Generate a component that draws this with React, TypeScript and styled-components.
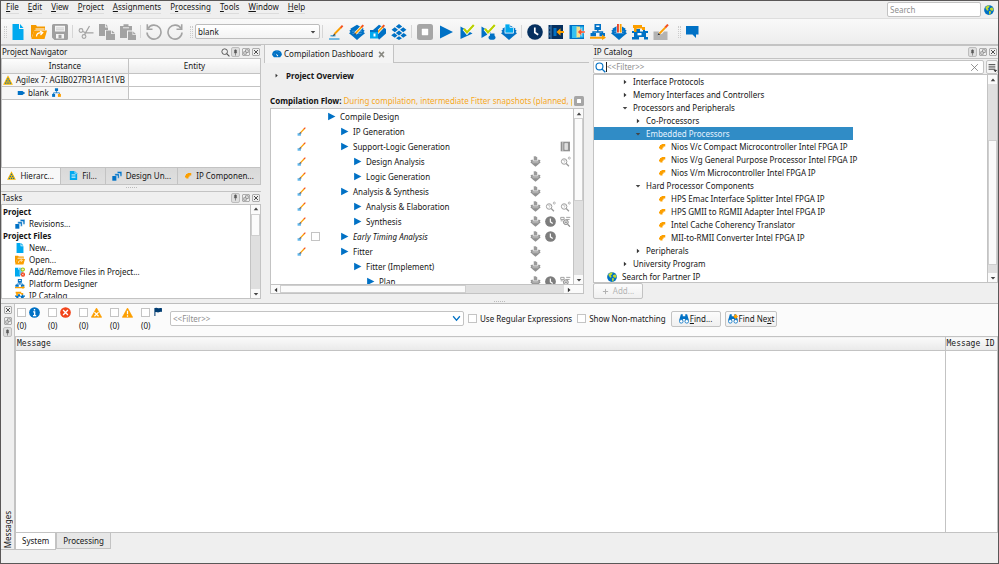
import React from "react";
import styled, { createGlobalStyle, css } from "styled-components";

const blue = "#0071c5";
const navy = "#003c71";
const orange = "#fc9f00";
const cyan = "#00a9ef";
const grey = "#a3a3a3";
const line = "#c3c3c3";
const face = "#efefef";
const sans = `"Noto Sans", "Open Sans", sans-serif`;
const mono = `"DejaVu Sans Mono", "Liberation Mono", monospace`;

const GlobalStyle = createGlobalStyle`
  * { box-sizing: border-box; }
  body { margin: 0; background: ${face}; }
  button, input, select { font: inherit; color: inherit; margin: 0; }
  ul { list-style: none; margin: 0; padding: 0; }
`;

/* ---------- icons ---------- */

const chip = (c: string) => (
  <>
    <path d="M8 16 4 12.500 0 9.200 1.500 8 .3 6.800 2 5.600 1.300 4.800 8 .8l6.700 4-.7.8 1.700 1.200L14.500 8 16 9.200l-4 3.300z" fill={c} />
    <path d="M3 7.200h10M3.400 9.400h9.200" stroke="#fff" strokeWidth=".6" opacity=".45" />
  </>
);
const pencil = (
  <>
    <path d="M6.500 9.500 12.600 3" stroke="#fff" strokeWidth="3.200" />
    <path d="M6.500 9.500 12.600 3" stroke={orange} strokeWidth="1.800" />
    <path d="m12.300 3.400 2-2.200" stroke="#f4511e" strokeWidth="2" />
    <path d="m5.300 10.800.5-2 1.500 1.300z" fill="#444" />
  </>
);
const check = <path d="m5 4.800 3 3.600L14.800 1" fill="none" stroke="#b9d000" strokeWidth="2.200" />;
const checkHalo = <path d="m5 4.800 3 3.600L14.800 1" fill="none" stroke="#fff" strokeWidth="3.600" />;
const steps = (
  <>
    <path d="M.5 8H7v7.500H.5z" fill={blue} />
    <path d="M4.500 4.500h7v7H9V7.500H4.500z" fill={blue} stroke="#fff" strokeWidth=".5" />
    <path d="M8.500.8h7.200v7.500H13V4H8.500z" fill={blue} stroke="#fff" strokeWidth=".5" />
  </>
);
const hier = (
  <>
    <path d="M5.200.5h5.600v5H5.200z" fill={blue} />
    <path d="M8 5.500v3M2.800 12V8.500h10.400V11" fill="none" stroke={blue} strokeWidth="1.300" />
    <path d="M.2 10.500h5.300v5.300H.2z" fill={blue} />
    <path d="M10.500 10.500h5.300v5.300h-5.300z" fill={orange} />
  </>
);
const lens = (
  <>
    <circle cx="6" cy="8" r="4" fill="none" stroke="#999" strokeWidth="1.400" />
    <path d="m9 11 4 4" stroke="#999" strokeWidth="1.800" />
    <path d="M4.700 7a1.400 1.400 0 1 1 1.400 1.500v1" fill="none" stroke="#aaa" strokeWidth=".9" />
  </>
);
const glasses = (
  <>
    <path d="M3 .5h3v3h4v-3h3L15.800 10h-6V8H6.200v2h-6z" fill={blue} />
    <circle cx="3.600" cy="11.700" r="2.900" fill="#fff" stroke={blue} strokeWidth="1.300" />
    <circle cx="12.400" cy="11.700" r="2.900" fill="#fff" stroke={blue} strokeWidth="1.300" />
  </>
);

const art: Record<string, React.ReactNode> = {
  newFile: <path d="M2.500 0h6.500v5h4.500v11h-11zM10 0l3.500 4H10z" fill={cyan} />,
  open: (
    <>
      <path d="M0 15V1h5l1 1.500h8V6H3.500z" fill="#f59a00" />
      <path d="M3 6.500h13L13.500 15H.5z" fill={orange} />
      <path d="M4.500 5h9M5.500 12.500c0-3 2-3.800 5-3.800M9 7l2.800 1.700L9.500 11" fill="none" stroke="#fff" strokeWidth="1.200" />
    </>
  ),
  save: (
    <>
      <path d="M1.500 0h13A1.500 1.500 0 0 1 16 1.500v13a1.500 1.500 0 0 1-1.500 1.500h-12L0 13.500v-12A1.500 1.500 0 0 1 1.500 0z" fill="#a0a0a0" />
      <path d="M3 1.800h10v5.700H3z" fill="#f4f4f4" />
      <path d="M4 4h8M4 5.800h8" stroke="#bbb" strokeWidth=".7" />
      <path d="M4 10h8v4.500H4z" fill="#f4f4f4" />
      <path d="M6.500 10.800h3v3.500h-3z" fill="#a0a0a0" />
    </>
  ),
  cut: (
    <>
      <circle cx="3" cy="6.500" r="1.900" fill="none" stroke={grey} strokeWidth="1.100" />
      <circle cx="6" cy="12.500" r="1.900" fill="none" stroke={grey} strokeWidth="1.100" />
      <path d="M4.800 7.500 8 8.800h7.500M6.500 10.600 11.500 2" fill="none" stroke={grey} strokeWidth="1.200" />
    </>
  ),
  copy: (
    <>
      <path d="M0 0h6v3.500h3V6H6v6H0zM6.800 0 9 2.500H6.800z" fill={grey} />
      <path d="M7 6.500h5V10h4v6H7zM12.800 6.500 16 9.300h-3.200z" fill={grey} />
    </>
  ),
  paste: (
    <>
      <path d="M0 2h3.500V.3h5V2H12v4.500H7V14H0z" fill={grey} />
      <path d="M3 3.800h6" stroke="#eee" />
      <path d="M8 7.500h4.500V11H16v5H8zM13.200 7.500 16 10.300h-2.800z" fill={grey} />
    </>
  ),
  undo: (
    <>
      <path d="M2 4.500A7 7 0 1 1 1 8.500" fill="none" stroke={grey} strokeWidth="1.600" />
      <path d="M1.300.3v5h5.200" fill="none" stroke={grey} strokeWidth="1.600" />
    </>
  ),
  redo: (
    <>
      <path d="M14 4.500A7 7 0 1 0 15 8.500" fill="none" stroke={grey} strokeWidth="1.600" />
      <path d="M14.700.3v5H9.500" fill="none" stroke={grey} strokeWidth="1.600" />
    </>
  ),
  brush: (
    <>
      <path d="M2.500 11.800h5M1 15h10.500" stroke="#4aa8de" strokeWidth="1.500" />
      <path d="M6.500 10 12.800 3.500" stroke={orange} strokeWidth="1.800" />
      <path d="m12.600 3.800 2-2.200" stroke="#f4511e" strokeWidth="2" />
      <path d="M4.500 12.500 6 9.500l1.500 1.300z" fill="#444" />
    </>
  ),
  brushSmall: (
    <>
      <path d="M1 11h6v4.500H1z" fill="#5fb6ea" />
      <path d="M6.500 10 12.500 3.500" stroke={orange} strokeWidth="2.200" />
      <path d="m12.300 3.800 2.500-2.800" stroke="#f4511e" strokeWidth="2.200" />
      <path d="m3.500 12.500 2-4 3 2.500z" fill="#666" />
    </>
  ),
  chipPen: <>{chip(blue)}{pencil}</>,
  chipPen2: (
    <>
      <path d="m3 6 6-5.200L16 5v4.500L9 15.800z" fill={blue} />
      {pencil}
      <path d="M0 6h8v8.500H0z" fill={cyan} />
      <path d="M0 6h8v2H0z" fill={blue} />
      <path d="M3.500 9.500h2v3h-2z" fill="#fff" />
    </>
  ),
  diamonds: (
    <path
      d="m8 0 3.200 2.400L8 4.800 4.800 2.400zM3.800 3.300 7 5.800l-3.200 2.500L.6 5.800zM12.200 3.300l3.200 2.500-3.200 2.500L9 5.800zM8 6.600l3.200 2.500L8 11.600 4.800 9.100zM3.300 9l3.200 2.400-2.700 2.300L.2 11.200zM12.700 9l3.100 2.200-3.600 2.500-2.700-2.300zM8 12.200l3 2L8 16l-3-1.800z"
      fill={blue}
    />
  ),
  stop: (
    <>
      <rect width="16" height="16" rx="2.500" fill="#a6a6a6" />
      <rect x="4.800" y="4.800" width="6.400" height="6.400" rx=".6" fill="#fff" />
    </>
  ),
  play: <path d="M2 1.500 15 8 2 14.500z" fill={blue} />,
  playCheck: <><path d="M1.500 2.500 13.500 9.500l-12 5.500z" fill={blue} />{checkHalo}{check}</>,
  playCheckDb: (
    <>
      <path d="M1.500 2.500 11 8.500 1.500 14z" fill={blue} />
      {checkHalo}
      {check}
      <ellipse cx="12" cy="13.500" rx="3.500" ry="2.300" fill={blue} />
      <path d="M10 9.500h4.500V12H10z" fill={blue} />
    </>
  ),
  chipFile: <>{chip(blue)}<path d="M4 0h5v3.500h3.500V9H4z" fill={cyan} stroke="#fff" strokeWidth=".7" /></>,
  clock: (
    <>
      <circle cx="8" cy="8" r="7.800" fill="#06305f" />
      <path d="M7.800 3.500v5l3.400 2.300" fill="none" stroke="#fff" strokeWidth="1.700" />
    </>
  ),
  clockGrey: (
    <>
      <circle cx="8" cy="8" r="7.800" fill="#7d7d7d" />
      <path d="M7.800 3.500v5l3.400 2.300" fill="none" stroke="#fff" strokeWidth="1.700" />
    </>
  ),
  boardDark: (
    <>
      <path d="M.5 1h14.500v14H.5z" fill="#06305f" />
      <path d="M3 1v14M.5 4h2M.5 8h2M.5 12h2" stroke="#4c8fc6" strokeWidth=".9" />
      <path d="M5.500 4h3v8h-3z" fill={blue} />
      <path d="m8.500 8 4-3.800V7H16v2h-3.500v2.800z" fill={orange} />
    </>
  ),
  boardLight: (
    <>
      <path d="M.5 1h14.500v14H.5z" fill={blue} />
      <path d="M3 2h5.500v12H3z" fill="#35c0f1" />
      <path d="M7.500 2.500H11v11H7.500z" fill="#f7e08a" />
      <path d="M11 2.500h3.500v11H11z" fill="#35c0f1" />
      <path d="m8.500 8 4-3.800V7H16v2h-3.500v2.800z" fill="#f2542d" stroke="#fff" strokeWidth=".4" />
    </>
  ),
  platform: (
    <>
      <path d="M4.500 0H11v6H4.500z" fill={blue} />
      <path d="M6.200 1.500h3.200v1.500H6.200z" fill="#fff" />
      <path d="M7.800 5.500v3M3 10V8h9.500v2" fill="none" stroke={blue} strokeWidth="1.400" />
      <path d="M.5 9h5.500v3.300H.5zM9.500 9H15v3.300H9.500z" fill={blue} />
      <path d="M0 12.800h12V10.500l4 3.300-4 2.200v-1.300H0z" fill={orange} />
    </>
  ),
  chipFlag: (
    <>
      {chip(blue)}
      <path d="M5.500 0h5.500v9H5.500z" fill="#fff" />
      <path d="M6 0h1.900v8.500H6z" fill="#e8442a" />
      <path d="M8.700 0h1.900v8.500H8.700z" fill={orange} />
    </>
  ),
  ipCatalog: (
    <>
      <path d="M0 7h4V5h4v2.500h3V4h2v3h3v2h-2v4h2v2.500h-4V13H7v2.500H0V13h2V9H0z" fill={blue} />
      <path d="M1 1h9v2h3v3h-3V4.500H4.500V8H2V4H1z" fill={orange} />
      <path d="M5.500 9h4v2.300h-4z" fill="#fff" />
    </>
  ),
  editPad: (
    <>
      <path d="M.5 7.500H6L4.500 12l5-2.500 1.500-2h3.500V16H.5z" fill="#b3b3b3" />
      <path d="m6.500 9.500 6-6.200" stroke={orange} strokeWidth="1.800" />
      <path d="m12.300 3.500 2.700-2.900" stroke="#f4511e" strokeWidth="2" />
      <path d="m4.500 11.500 1-2.500 2 1.500z" fill="#333" />
    </>
  ),
  speech: <path d="M2 2h12.500v8.500H12V14L8.500 10.500H2z" fill={blue} />,
  globe: (
    <>
      <circle cx="8" cy="8" r="7.800" fill={blue} />
      <path d="M2 4.500C4 1 7 .5 9 1L8 4 6 5.500 7.500 8 5 9zM9.500 5l4-1.500 1.800 4L13 9.500l-3-1.500zM8 9.500l3.500 1L9.800 15l-1.500.2z" fill="#c1d82f" />
    </>
  ),
  search: (
    <>
      <circle cx="6.500" cy="6.500" r="5" fill="none" stroke="currentColor" strokeWidth="1.700" />
      <path d="m10 10 5 5" stroke="currentColor" strokeWidth="2" />
    </>
  ),
  pin: <path d="M8 1v14M4.500 8.500h7M6 2.500h4V8H6z" fill="#666" stroke="#555" strokeWidth="1.400" />,
  float: (
    <>
      <rect x=".7" y=".7" width="14.600" height="14.600" rx="3" fill="none" stroke="#777" strokeWidth="1.300" />
      <path d="M3.500 7.500h5v5h-5zM7 7V3.500h5.500V9H9" fill="none" stroke="#777" strokeWidth="1.400" />
    </>
  ),
  closeBox: (
    <>
      <rect x=".7" y=".7" width="14.600" height="14.600" rx="3" fill="none" stroke="#777" strokeWidth="1.300" />
      <path d="m4 4 8 8M12 4l-8 8" stroke="#444" strokeWidth="1.900" />
    </>
  ),
  close: <path d="m2 2 12 12M14 2 2 14" stroke="currentColor" strokeWidth="1.400" />,
  closeBold: <path d="m2.500 2 11 12M13.500 2l-11 12" stroke="#8a8a83" strokeWidth="3.500" />,
  family: (
    <>
      <path d="M8 .5 15.800 15.500H.2z" fill="#f5b400" />
      <path d="M7 5h2v2H7zM5 8.500h2v2H5zM9 8.500h2v2H9zM3.300 12h2v2h-2zM7 12h2v2H7zM10.700 12h2v2h-2z" fill={blue} />
    </>
  ),
  entity: <path d="M2 4h9l3.500 3H16v2h-1.500L11 12H2v-1.500H0v-1h2v-3H0v-1h2z" fill={blue} />,
  hier,
  steps,
  fileText: (
    <>
      <path d="M1.500 0h9l4 4v12h-13z" fill={cyan} />
      <path d="M4.500 6.500h7M4.500 9h7M4.500 11.500h7" stroke="#fff" strokeWidth="1.100" />
      <path d="M10.500 0v4h4" fill="none" stroke="#fff" />
    </>
  ),
  ip: <path d="M4 4h3V2h7.500v5H11v2.500H9V13H4.500v-2H2V7h2z" fill={orange} />,
  addRemove: (
    <>
      <path d="M0 1h5v3h3v11H0z" fill={cyan} />
      <path d="M5 1h5l2 3v9H7V4z" fill="#6bccf5" />
      <circle cx="12.500" cy="4" r="3.400" fill="#a6c400" />
      <path d="M12.500 2v4M10.500 4h4" stroke="#fff" />
      <circle cx="12.500" cy="12" r="3.600" fill="#f2451c" />
      <path d="m11 10.500 3 3M14 10.500l-3 3" stroke="#fff" />
    </>
  ),
  gauge: (
    <>
      <path d="M.3 9.500C-.3 5 3.500 2 8 2s8.300 3 7.700 7.500L13 13H3z" fill={blue} />
      <path d="M8.500 12 6 7l4 3.500z" fill="#fff" />
      <path d="M3 8h1M11.500 5.500l.8-.8M8 4V3" stroke="#fff" strokeWidth=".7" />
    </>
  ),
  chipGrey: (
    <>
      <path d="M8 15.800 4 12.500.5 9.200 2 8 .5 6.800l2-1.200h11l2 1.200L14 8l1.500 1.200-3.500 3.300z" fill="#909090" />
      <path d="M3 7.400h10M3.500 9.800h9" stroke="#fff" strokeWidth=".9" opacity=".6" />
      <path d="M5 0h3.500L11 2v5H5z" fill="#9a9a9a" stroke="#fff" strokeWidth=".9" />
    </>
  ),
  netlist: (
    <>
      <path d="M1 1h13.500v14H1z" fill="#909090" />
      <path d="M4 1v14M7 3.500h4v9H7z" fill="#ddd" stroke="#eee" strokeWidth=".9" />
    </>
  ),
  lensDot: <>{lens}<circle cx="13.500" cy="3" r="1.500" fill="none" stroke="#999" /></>,
  lensNet: (
    <>
      <path d="M1 2h5v3H1zM9 2h6M1 7h3M9 5h5" fill="none" stroke="#999" strokeWidth="1.300" />
      <circle cx="8.500" cy="9" r="3.500" fill="#ddd" stroke="#8a8a8a" strokeWidth="1.400" />
      <path d="m11 12 3.500 3.500M7 9h3" stroke="#888" strokeWidth="1.600" />
    </>
  ),
  info: (
    <>
      <circle cx="8" cy="8" r="7.800" fill={blue} />
      <path d="M8 2.800v2.300M6 7h2.200v5.500M5.800 12.500h4.700" fill="none" stroke="#fff" strokeWidth="2" />
    </>
  ),
  error: (
    <>
      <circle cx="8" cy="8" r="7.800" fill="#f2451c" />
      <path d="m4.500 4.500 7 7M11.500 4.500l-7 7" stroke="#fff" strokeWidth="2" />
    </>
  ),
  critical: (
    <>
      <path d="M8 1.500 15.500 15H.5z" fill={orange} stroke={orange} strokeLinejoin="round" />
      <path d="m5 7.500 6 6M11 7.500l-6 6" stroke="#fff" strokeWidth="1.700" />
    </>
  ),
  warning: (
    <>
      <path d="M8 1.500 15.500 15H.5z" fill={orange} stroke={orange} strokeLinejoin="round" />
      <path d="M8 5.500v5M8 12v2" stroke="#fff" strokeWidth="1.800" />
    </>
  ),
  flag: <path d="M2 1.500h1.500c2-1 3.500 1 5.500.3 1.300-.6 2.500-.6 4 0v5.500c-2-.8-3.500 0-4.500.5-2 .5-3-.8-5-.3V13H2z" fill={navy} />,
  binoculars: glasses,
  binocularsNext: <>{glasses}<path d="m8.500 4 3.700-4L16 4l-3.800 4z" fill={orange} /></>,
  plus: <path d="M8 2v12M2 8h12" stroke="#b0b0b0" strokeWidth="2.200" />,
  menu: <path d="M1 3h12M1 7h12M1 11h12M11 13h4l-2 2.500z" fill="#333" stroke="#333" strokeWidth="1.700" />,
  chevron: <path d="m2 4 6 7 6-7" fill="none" stroke={blue} strokeWidth="2.200" />,
  up: <path d="m8 4 6 7H2z" fill="#444" />,
  down: <path d="m8 12 6-7H2z" fill="#444" />,
  left: <path d="m4 8 7-6v12z" fill="#333" />,
  right: <path d="M12 8 5 2v12z" fill="#333" />,
};

const Svg = styled.svg<{ $size: number }>`
  display: block;
  flex: none;
  width: ${(p) => p.$size}px;
  height: ${(p) => p.$size}px;
`;

const Icon = ({ name, size = 16 }: { name: string; size?: number }) => (
  <Svg $size={size} viewBox="0 0 16 16" aria-hidden="true">{art[name]}</Svg>
);

/* ---------- shared parts ---------- */

const Window = styled.div`
  display: grid;
  grid-template-rows: auto auto minmax(0, 254fr) 4px minmax(0, 247fr) auto;
  height: 100vh;
  border: 1px solid #5a5858;
  background: ${face};
  color: #161616;
  font: 8px/12px ${sans};
  overflow: hidden;
  white-space: nowrap;
`;

const FlatButton = styled.button`
  display: flex;
  align-items: center;
  justify-content: center;
  padding: 0;
  border: 0;
  background: none;
`;

const Field = styled.input`
  min-width: 0;
  padding: 0 2px;
  border: 1px solid ${line};
  border-radius: 2px;
  background: #fff;
  outline: none;
  &::placeholder { color: #8f8f8f; opacity: 1; }
`;

const Tick = styled.input.attrs({ type: "checkbox" })`
  appearance: none;
  flex: none;
  width: 9px;
  height: 9px;
  border: 1px solid #c4c4c4;
  background: #fff;
`;

const Title = styled.h2`
  flex: 1;
  margin: 0;
  font-size: 8px;
  font-weight: 400;
`;

const DockBar = styled.header`
  display: flex;
  align-items: center;
  gap: 1px;
  height: 14px;
  padding: 0 1px;
  border: solid ${line};
  border-width: 1px 0;
`;

const DockButton = styled(FlatButton)<{ $on?: boolean }>`
  width: 9px;
  height: 10px;
  border: 1px solid ${(p) => (p.$on ? "#bdbdbd" : "transparent")};
  border-radius: 2px;
  background: ${(p) => (p.$on ? "#dedede" : "none")};
  color: #555;
`;

const DockControls = ({ reverse = false }: { reverse?: boolean }) => {
  const items = [
    <DockButton key="p" $on aria-label="Pin"><Icon name="pin" size={7} /></DockButton>,
    <DockButton key="f" aria-label="Float"><Icon name="float" size={8} /></DockButton>,
    <DockButton key="c" aria-label="Close"><Icon name="closeBox" size={8} /></DockButton>,
  ];
  return <>{reverse ? items.reverse() : items}</>;
};

const Bar = styled.div<{ $row?: boolean }>`
  display: flex;
  flex: none;
  flex-direction: ${(p) => (p.$row ? "row" : "column")};
  ${(p) =>
    p.$row
      ? css`height: 9px; padding-right: 10px; border-top: 1px solid ${line};`
      : css`width: 10px; border-left: 1px solid ${line};`}
  background: #fafafa;
`;
const BarButton = styled(FlatButton)`
  flex: none;
  width: 9px;
  height: 9px;
`;
const Track = styled.div<{ $part: number }>`
  flex: ${(p) => p.$part} 1 0;
  background: #dfdfdf;
`;
const Thumb = styled(Track)`
  border: 1px solid #cfcfcf;
  background: #fbfbfb;
`;

const ScrollBar = ({ row, parts }: { row?: boolean; parts: [number, number, number] }) => (
  <Bar $row={row}>
    <BarButton aria-label="Scroll back" tabIndex={-1}><Icon name={row ? "left" : "up"} size={6} /></BarButton>
    <Track $part={parts[0]} />
    <Thumb $part={parts[1]} />
    <Track $part={parts[2]} />
    <BarButton aria-label="Scroll forward" tabIndex={-1}><Icon name={row ? "right" : "down"} size={6} /></BarButton>
  </Bar>
);

const Column = styled.section`
  display: flex;
  flex-direction: column;
  min-width: 0;
  min-height: 0;
`;

const Sheet = styled.div<{ $share?: number }>`
  display: flex;
  flex: ${(p) => p.$share ?? 1} 1 0;
  min-height: 0;
  border: 1px solid ${line};
  border-top: 0;
  background: #fff;
`;

const Clip = styled.div`
  flex: 1;
  min-width: 0;
  overflow: hidden;
`;

/* ---------- menu and toolbar ---------- */

const MenuBar = styled.nav`
  display: flex;
  gap: 9px;
  height: 17px;
  padding: 0 4px 0 5px;
`;
const MenuLink = styled.button`
  height: 13px;
  padding: 0;
  border: 0;
  border-bottom: 1px solid #dcdcdc;
  background: none;
  line-height: 12px;
  u { text-underline-offset: 1px; }
`;
const SearchGroup = styled.div`
  display: flex;
  align-items: center;
  gap: 3px;
  margin-left: auto;
`;
const TopSearch = styled(Field)`
  width: 94px;
  height: 15px;
`;
const MENUS: [string, string, string][] = [
  ["", "F", "ile"], ["", "E", "dit"], ["", "V", "iew"], ["", "P", "roject"], ["", "A", "ssignments"],
  ["P", "r", "ocessing"], ["", "T", "ools"], ["", "W", "indow"], ["", "H", "elp"],
];

const ToolBar = styled.div`
  display: flex;
  align-items: center;
  height: 27px;
  padding: 0 3px;
  border-top: 1px solid #dedede;
  border-bottom: 1px solid ${line};
  background: linear-gradient(#f9f9f9, #ededed);
`;
const Grip = styled.span`
  width: 3px;
  height: 12px;
  border: dotted #cbcbcb;
  border-width: 0 1px;
`;
const Rule = styled.span`
  width: 1px;
  height: 13px;
  margin: 0 2px;
  background: #d6d6d6;
`;
const Tool = styled(FlatButton)`
  width: 21px;
  height: 21px;
`;
const ComboBox = styled.div`
  display: grid;
  align-items: center;
  width: 125px;
  margin-left: 2px;
  > * { grid-area: 1 / 1; }
  > svg { justify-self: end; margin-right: 4px; pointer-events: none; }
`;
const Combo = styled.select`
  appearance: none;
  height: 15px;
  padding: 0 2px;
  border: 1px solid #bcbcbc;
  border-radius: 2px;
  background: linear-gradient(#fff, #f3f3f3);
`;
const Gap = styled.span<{ $wide?: boolean }>`
  width: ${(p) => (p.$wide ? 7 : 5)}px;
`;

const tools = (list: string) =>
  list.split(" ").map((n) => (
    <Tool key={n} aria-label={n}><Icon name={n} /></Tool>
  ));

/* ---------- left column ---------- */

const NavTable = styled.table`
  width: 100%;
  border-collapse: collapse;
  table-layout: fixed;
  th, td { height: 13px; padding: 0; border: solid ${line}; border-width: 0 1px 1px 0; }
  th { font-weight: 400; height: 14px; background: linear-gradient(#fdfdfd, #ececec); }
  th:first-child { width: 49%; }
  td:first-child { background: #f7f7f7; }
  th:last-child, td:last-child { border-right: 0; }
`;
const Cell = styled.div<{ $indent?: number }>`
  display: flex;
  align-items: center;
  gap: 3px;
  height: 12px;
  padding-left: ${(p) => p.$indent ?? 0}px;
`;
const TabRow = styled.div`
  display: flex;
  height: 17px;
`;
const NavTab = styled.button<{ $share: number; $on?: boolean }>`
  display: flex;
  flex: ${(p) => p.$share} 1 0;
  align-items: center;
  justify-content: center;
  gap: 4px;
  min-width: 0;
  padding: 0;
  border: 1px solid ${line};
  border-top: 0;
  border-left: 0;
  background: ${(p) => (p.$on ? "#f8f8f8" : "linear-gradient(#d9d9d9, #dfdfdf)")};
`;
const Splitter = styled.div`
  display: flex;
  align-items: center;
  justify-content: center;
  height: 6px;
  &::after { content: ""; width: 11px; border-top: 1px dotted #bbb; }
`;
const MainSplitter = styled(Splitter)`
  height: 4px;
`;
const TaskList = styled.ul`
  padding: 1px 1px 0;
`;
const Task = styled.li<{ $head?: boolean }>`
  display: flex;
  align-items: center;
  gap: 4px;
  height: 12px;
  padding-left: ${(p) => (p.$head ? 0 : 12)}px;
  font-weight: ${(p) => (p.$head ? 700 : 400)};
`;
const TASKS: [string, string?][] = [
  ["Project"], ["Revisions...", "steps"], ["Project Files"], ["New...", "newFile"], ["Open...", "open"],
  ["Add/Remove Files in Project...", "addRemove"], ["Platform Designer", "platform"], ["IP Catalog", "ipCatalog"],
];

/* ---------- compilation dashboard ---------- */

const Docks = styled.main`
  display: grid;
  grid-template-columns: 260fr 332fr 405fr;
  min-height: 0;
`;
const Dashboard = styled(Column)`
  padding: 0 4px 5px 3px;
`;
const DashTabs = styled.div`
  display: flex;
  height: 18px;
  &::after { content: ""; flex: 1; border-bottom: 1px solid ${line}; }
`;
const DashTab = styled.div`
  display: flex;
  align-items: center;
  gap: 2px;
  padding: 0 8px 0 7px;
  border: solid ${line};
  border-width: 0 1px 0 1px;
  background: #f4f4f4;
  button { margin-left: 3px; }
`;
const DashBody = styled.div`
  display: flex;
  flex: 1;
  flex-direction: column;
  min-height: 0;
  padding: 0 5px 0 6px;
`;
const Overview = styled.h3`
  display: flex;
  align-items: center;
  gap: 7px;
  height: 25px;
  margin: 0;
  padding-left: 4px;
  font-size: 8px;
`;
const Flow = styled.div`
  display: flex;
  align-items: center;
  gap: 2px;
  height: 20px;
  padding-top: 6px;
  b { flex: none; color: #111; }
`;
const Notice = styled.span`
  flex: 1;
  min-width: 0;
  overflow: hidden;
  color: #f7a823;
`;
const FlowFrame = styled.div`
  display: flex;
  flex: 1;
  flex-direction: column;
  min-height: 0;
  border: 1px solid ${line};
  background: #fff;
`;
const FlowMain = styled.div`
  display: flex;
  flex: 1;
  min-height: 0;
`;
const Step = styled.li`
  display: grid;
  grid-template-columns: 26px 14px 16px 1fr auto;
  align-items: center;
  height: 15px;
`;
const StepClean = styled.span`
  grid-column: 2;
`;
const StepName = styled.span<{ $level: number; $italic?: boolean }>`
  display: flex;
  grid-column: 4;
  align-items: center;
  gap: 4px;
  padding-left: ${(p) => p.$level * 13}px;
  font-style: ${(p) => (p.$italic ? "italic" : "normal")};
`;
const StepTools = styled.span`
  display: grid;
  grid-template-columns: repeat(3, 15px);
  justify-items: center;
  height: 11px;
`;
type StepRow = { name: string; level: number; clean?: boolean; tick?: boolean; tools?: string[] };
const STEPS: StepRow[] = [
  { name: "Compile Design", level: 0 },
  { name: "IP Generation", level: 1, clean: true },
  { name: "Support-Logic Generation", level: 1, clean: true, tools: ["", "", "netlist"] },
  { name: "Design Analysis", level: 2, clean: true, tools: ["chipGrey", "", "lensDot"] },
  { name: "Logic Generation", level: 2, clean: true, tools: ["chipGrey"] },
  { name: "Analysis & Synthesis", level: 1, clean: true, tools: ["chipGrey"] },
  { name: "Analysis & Elaboration", level: 2, clean: true, tools: ["chipGrey", "lensDot", "lensDot"] },
  { name: "Synthesis", level: 2, clean: true, tools: ["chipGrey", "clockGrey", "lensNet"] },
  { name: "Early Timing Analysis", level: 1, clean: true, tick: true, tools: ["chipGrey", "clockGrey"] },
  { name: "Fitter", level: 1, clean: true, tools: ["chipGrey"] },
  { name: "Fitter (Implement)", level: 2, tools: ["chipGrey"] },
  { name: "Plan", level: 3, tools: ["chipGrey", "clockGrey", "lensNet"] },
];

/* ---------- IP catalog ---------- */

const FilterRow = styled.div`
  display: flex;
  gap: 2px;
  height: 16px;
  padding-top: 1px;
  border-bottom: 1px solid ${line};
`;
const FilterBox = styled.label`
  display: flex;
  flex: 1;
  align-items: center;
  padding: 0 4px 0 1px;
  border: 1px solid ${line};
  border-radius: 2px;
  background: #fff;
  > svg { color: ${blue}; }
  button { color: #777; }
`;
const BareField = styled(Field)`
  flex: 1;
  height: 10px;
  padding: 0;
  border: 0;
  border-left: 1px solid #222;
  border-radius: 0;
`;
const FilterMenu = styled(FlatButton)`
  width: 12px;
  border: 1px solid ${line};
  border-radius: 2px;
  background: #f6f6f6;
`;
const Node = styled.li<{ $level: number; $picked?: boolean }>`
  display: flex;
  align-items: center;
  gap: 5px;
  width: 66%;
  height: 13px;
  padding-left: ${(p) => p.$level}px;
  background: ${(p) => (p.$picked ? "#308cc6" : "none")};
  color: ${(p) => (p.$picked ? "#e6f3ff" : "inherit")};
`;
const NODES: [string, number, string][] = [
  ["Interface Protocols", 28, "right"],
  ["Memory Interfaces and Controllers", 28, "right"],
  ["Processors and Peripherals", 28, "down"],
  ["Co-Processors", 41, "right"],
  ["Embedded Processors", 41, "down"],
  ["Nios V/c Compact Microcontroller Intel FPGA IP", 64, "ip"],
  ["Nios V/g General Purpose Processor Intel FPGA IP", 64, "ip"],
  ["Nios V/m Microcontroller Intel FPGA IP", 64, "ip"],
  ["Hard Processor Components", 41, "down"],
  ["HPS Emac Interface Splitter Intel FPGA IP", 64, "ip"],
  ["HPS GMII to RGMII Adapter Intel FPGA IP", 64, "ip"],
  ["Intel Cache Coherency Translator", 64, "ip"],
  ["MII-to-RMII Converter Intel FPGA IP", 64, "ip"],
  ["Peripherals", 41, "right"],
  ["University Program", 28, "right"],
  ["Search for Partner IP", 13, "globe"],
];
const iconSize = (n: string) => (n === "ip" ? 8 : n === "globe" ? 10 : 6);

const PushButton = styled.button<{ $wide?: boolean }>`
  display: flex;
  flex: none;
  align-items: center;
  justify-content: center;
  gap: ${(p) => (p.$wide ? 4 : 1)}px;
  min-width: 50px;
  height: 16px;
  padding: 0 2px;
  border: 1px solid ${line};
  border-radius: 2px;
  background: linear-gradient(#fcfcfc, #f0f0f0);
  &:disabled { align-self: flex-start; color: #b5b5b5; }
`;

/* ---------- messages ---------- */

const Messages = styled.section`
  display: grid;
  grid-template-columns: 14px minmax(0, 1fr);
  min-height: 0;
  border-top: 1px solid #bdbdbd;
`;
const Side = styled.header`
  display: flex;
  flex-direction: column;
  align-items: center;
  gap: 1px;
  padding: 1px 0;
  border: solid ${line};
  border-width: 0 1px 1px 0;
`;
const SideTitle = styled.h2`
  margin: auto 0 0;
  font-size: 8px;
  font-weight: 400;
  writing-mode: vertical-rl;
  transform: rotate(180deg);
`;
const MessageBar = styled.div`
  display: flex;
  align-items: center;
  height: 32px;
  padding: 0 2px 3px;
  background: #fbfbfb;
`;
const Counters = styled.div`
  display: flex;
  flex: none;
  gap: 8px;
`;
const Counter = styled.label`
  display: grid;
  grid-template-columns: 9px 11px;
  align-items: center;
  gap: 2px 3px;
  > span { grid-column: 1 / 3; line-height: 11px; }
`;
const MessageFilter = styled.label`
  display: flex;
  flex: 0 1 294px;
  align-items: center;
  height: 15px;
  margin: 0 4px 0 6px;
  padding-right: 2px;
  border: 1px solid ${line};
  border-radius: 2px;
  background: #fff;
  input { flex: 1; height: 12px; border: 0; }
`;
const Option = styled.label`
  display: flex;
  align-items: center;
  gap: 3px;
  margin-right: 5px;
`;
const ButtonPair = styled.div`
  display: flex;
  gap: 4px;
`;
const MessageSheet = styled.div`
  flex: 1;
  min-height: 0;
  border: solid ${line};
  border-width: 0 1px 1px;
  background: #fff;
`;
const MessageTable = styled.table`
  width: 100%;
  height: 100%;
  border-collapse: collapse;
  table-layout: fixed;
  font-family: ${mono};
  th {
    height: 14px;
    padding: 0 1px;
    border: 1px solid ${line};
    border-left: 0;
    background: linear-gradient(#fafafa, #e9e9e9);
    font-weight: 400;
    text-align: left;
  }
  td { padding: 0; border-right: 1px solid ${line}; }
  th:last-child, td:last-child { width: 52px; border-right: 0; }
`;
const MessageTab = styled.button<{ $on?: boolean }>`
  height: ${(p) => (p.$on ? 17 : 16)}px;
  padding: 0 6px;
  border: 1px solid ${line};
  border-top: 0;
  background: ${(p) => (p.$on ? "#fff" : "#e7e7e7")};
`;
const StatusBar = styled.footer`
  height: 13px;
`;

const COUNTERS: [string, string][] = [
  ["info", "Info"], ["error", "Errors"], ["critical", "Critical warnings"], ["warning", "Warnings"], ["flag", "Flagged"],
];

export default function App() {
  return (
    <>
      <GlobalStyle />
      <Window>
        <MenuBar>
          {MENUS.map(([a, b, c]) => (
            <MenuLink key={b + c}>{a}<u>{b}</u>{c}</MenuLink>
          ))}
          <SearchGroup>
            <TopSearch placeholder="Search" aria-label="Search" />
            <FlatButton aria-label="Web help"><Icon name="globe" size={10} /></FlatButton>
          </SearchGroup>
        </MenuBar>

        <ToolBar>
          <Grip />
          {tools("newFile open save")}
          <Rule />
          {tools("cut copy paste")}
          <Rule />
          {tools("undo redo")}
          <Gap /><Grip />
          <ComboBox>
            <Combo aria-label="Revision" defaultValue="blank"><option>blank</option></Combo>
            <Icon name="down" size={6} />
          </ComboBox>
          <Rule />
          {tools("brush chipPen chipPen2 diamonds")}
          <Rule />
          {tools("stop play playCheck playCheckDb chipFile")}
          <Rule />
          {tools("clock boardDark boardLight platform chipFlag ipCatalog editPad")}
          <Gap $wide /><Grip />
          {tools("speech")}
        </ToolBar>

        <Docks>
          <Column>
            <DockBar>
              <Title>Project Navigator</Title>
              <DockButton aria-label="Find"><Icon name="search" size={9} /></DockButton>
              <DockControls />
            </DockBar>
            <Sheet $share={109}>
              <Clip>
                <NavTable>
                  <thead><tr><th>Instance</th><th>Entity</th></tr></thead>
                  <tbody>
                    <tr><td><Cell $indent={1}><Icon name="family" size={10} />Agilex 7: AGIB027R31A1E1VB</Cell></td><td /></tr>
                    <tr><td><Cell $indent={15}><Icon name="entity" size={8} />blank<Icon name="hier" size={9} /></Cell></td><td /></tr>
                  </tbody>
                </NavTable>
              </Clip>
            </Sheet>
            <TabRow>
              <NavTab $share={60} $on><Icon name="family" size={9} />Hierarc...</NavTab>
              <NavTab $share={44}><Icon name="fileText" size={9} />Fil...</NavTab>
              <NavTab $share={72}><Icon name="steps" size={10} />Design Un...</NavTab>
              <NavTab $share={83}><Icon name="ip" size={8} />IP Componen...</NavTab>
            </TabRow>
            <Splitter />
            <DockBar><Title>Tasks</Title><DockControls /></DockBar>
            <Sheet $share={94}>
              <Clip>
                <TaskList>
                  {TASKS.map(([name, icon]) => (
                    <Task key={name} $head={!icon}>{icon && <Icon name={icon} size={10} />}{name}</Task>
                  ))}
                </TaskList>
              </Clip>
              <ScrollBar parts={[0, 21, 54]} />
            </Sheet>
          </Column>

          <Dashboard>
            <DashTabs>
              <DashTab>
                <Icon name="gauge" size={10} />Compilation Dashboard
                <FlatButton aria-label="Close tab"><Icon name="closeBold" size={7} /></FlatButton>
              </DashTab>
            </DashTabs>
            <DashBody>
              <Overview><Icon name="right" size={5} />Project Overview</Overview>
              <Flow>
                <b>Compilation Flow:</b>
                <Notice>During compilation, intermediate Fitter snapshots (planned, placed, routed)</Notice>
                <FlatButton aria-label="Stop"><Icon name="stop" size={10} /></FlatButton>
              </Flow>
              <FlowFrame>
                <FlowMain>
                  <Clip>
                    <ul>
                      {STEPS.map((s) => (
                        <Step key={s.name}>
                          <StepClean>{s.clean && <Icon name="brushSmall" size={9} />}</StepClean>
                          {s.tick && <Tick aria-label={`Enable ${s.name}`} />}
                          <StepName $level={s.level} $italic={s.tick}><Icon name="play" size={9} />{s.name}</StepName>
                          <StepTools>
                            {s.tools?.map((t, i) => (t ? <Icon key={i} name={t} size={11} /> : <span key={i} />))}
                          </StepTools>
                        </Step>
                      ))}
                    </ul>
                  </Clip>
                  <ScrollBar parts={[0, 83, 75]} />
                </FlowMain>
                <ScrollBar row parts={[0, 187, 100]} />
              </FlowFrame>
            </DashBody>
          </Dashboard>

          <Column>
            <DockBar><Title>IP Catalog</Title><DockControls /></DockBar>
            <FilterRow>
              <FilterBox>
                <Icon name="search" size={11} />
                <BareField placeholder="<<Filter>>" aria-label="Filter IP" />
                <FlatButton aria-label="Clear filter"><Icon name="close" size={9} /></FlatButton>
              </FilterBox>
              <FilterMenu aria-label="Filter options"><Icon name="menu" size={9} /></FilterMenu>
            </FilterRow>
            <Sheet>
              <Clip>
                <ul>
                  {NODES.map(([name, level, icon]) => (
                    <Node key={name} $level={level} $picked={name === "Embedded Processors"}>
                      <Icon name={icon} size={iconSize(icon)} />{name}
                    </Node>
                  ))}
                </ul>
              </Clip>
              <ScrollBar parts={[57, 124, 8]} />
            </Sheet>
            <PushButton $wide disabled><Icon name="plus" size={7} />Add...</PushButton>
          </Column>
        </Docks>

        <MainSplitter />

        <Messages>
          <Side><DockControls reverse /><SideTitle>Messages</SideTitle></Side>
          <Column>
            <MessageBar>
              <Counters>
                {COUNTERS.map(([icon, name]) => (
                  <Counter key={icon}><Tick aria-label={name} /><Icon name={icon} size={11} /><span>(0)</span></Counter>
                ))}
              </Counters>
              <MessageFilter>
                <Field placeholder="<<Filter>>" aria-label="Filter messages" />
                <FlatButton aria-label="Filter history"><Icon name="chevron" size={9} /></FlatButton>
              </MessageFilter>
              <Option><Tick />Use Regular Expressions</Option>
              <Option><Tick />Show Non-matching</Option>
              <ButtonPair>
                <PushButton><Icon name="binoculars" size={10} /><span><u>F</u>ind...</span></PushButton>
                <PushButton><Icon name="binocularsNext" size={10} /><span>Find Ne<u>x</u>t</span></PushButton>
              </ButtonPair>
            </MessageBar>
            <MessageSheet>
              <MessageTable>
                <thead><tr><th>Message</th><th>Message ID</th></tr></thead>
                <tbody><tr><td /><td /></tr></tbody>
              </MessageTable>
            </MessageSheet>
            <TabRow>
              <MessageTab $on>System</MessageTab>
              <MessageTab>Processing</MessageTab>
            </TabRow>
          </Column>
        </Messages>
        <StatusBar />
      </Window>
    </>
  );
}
